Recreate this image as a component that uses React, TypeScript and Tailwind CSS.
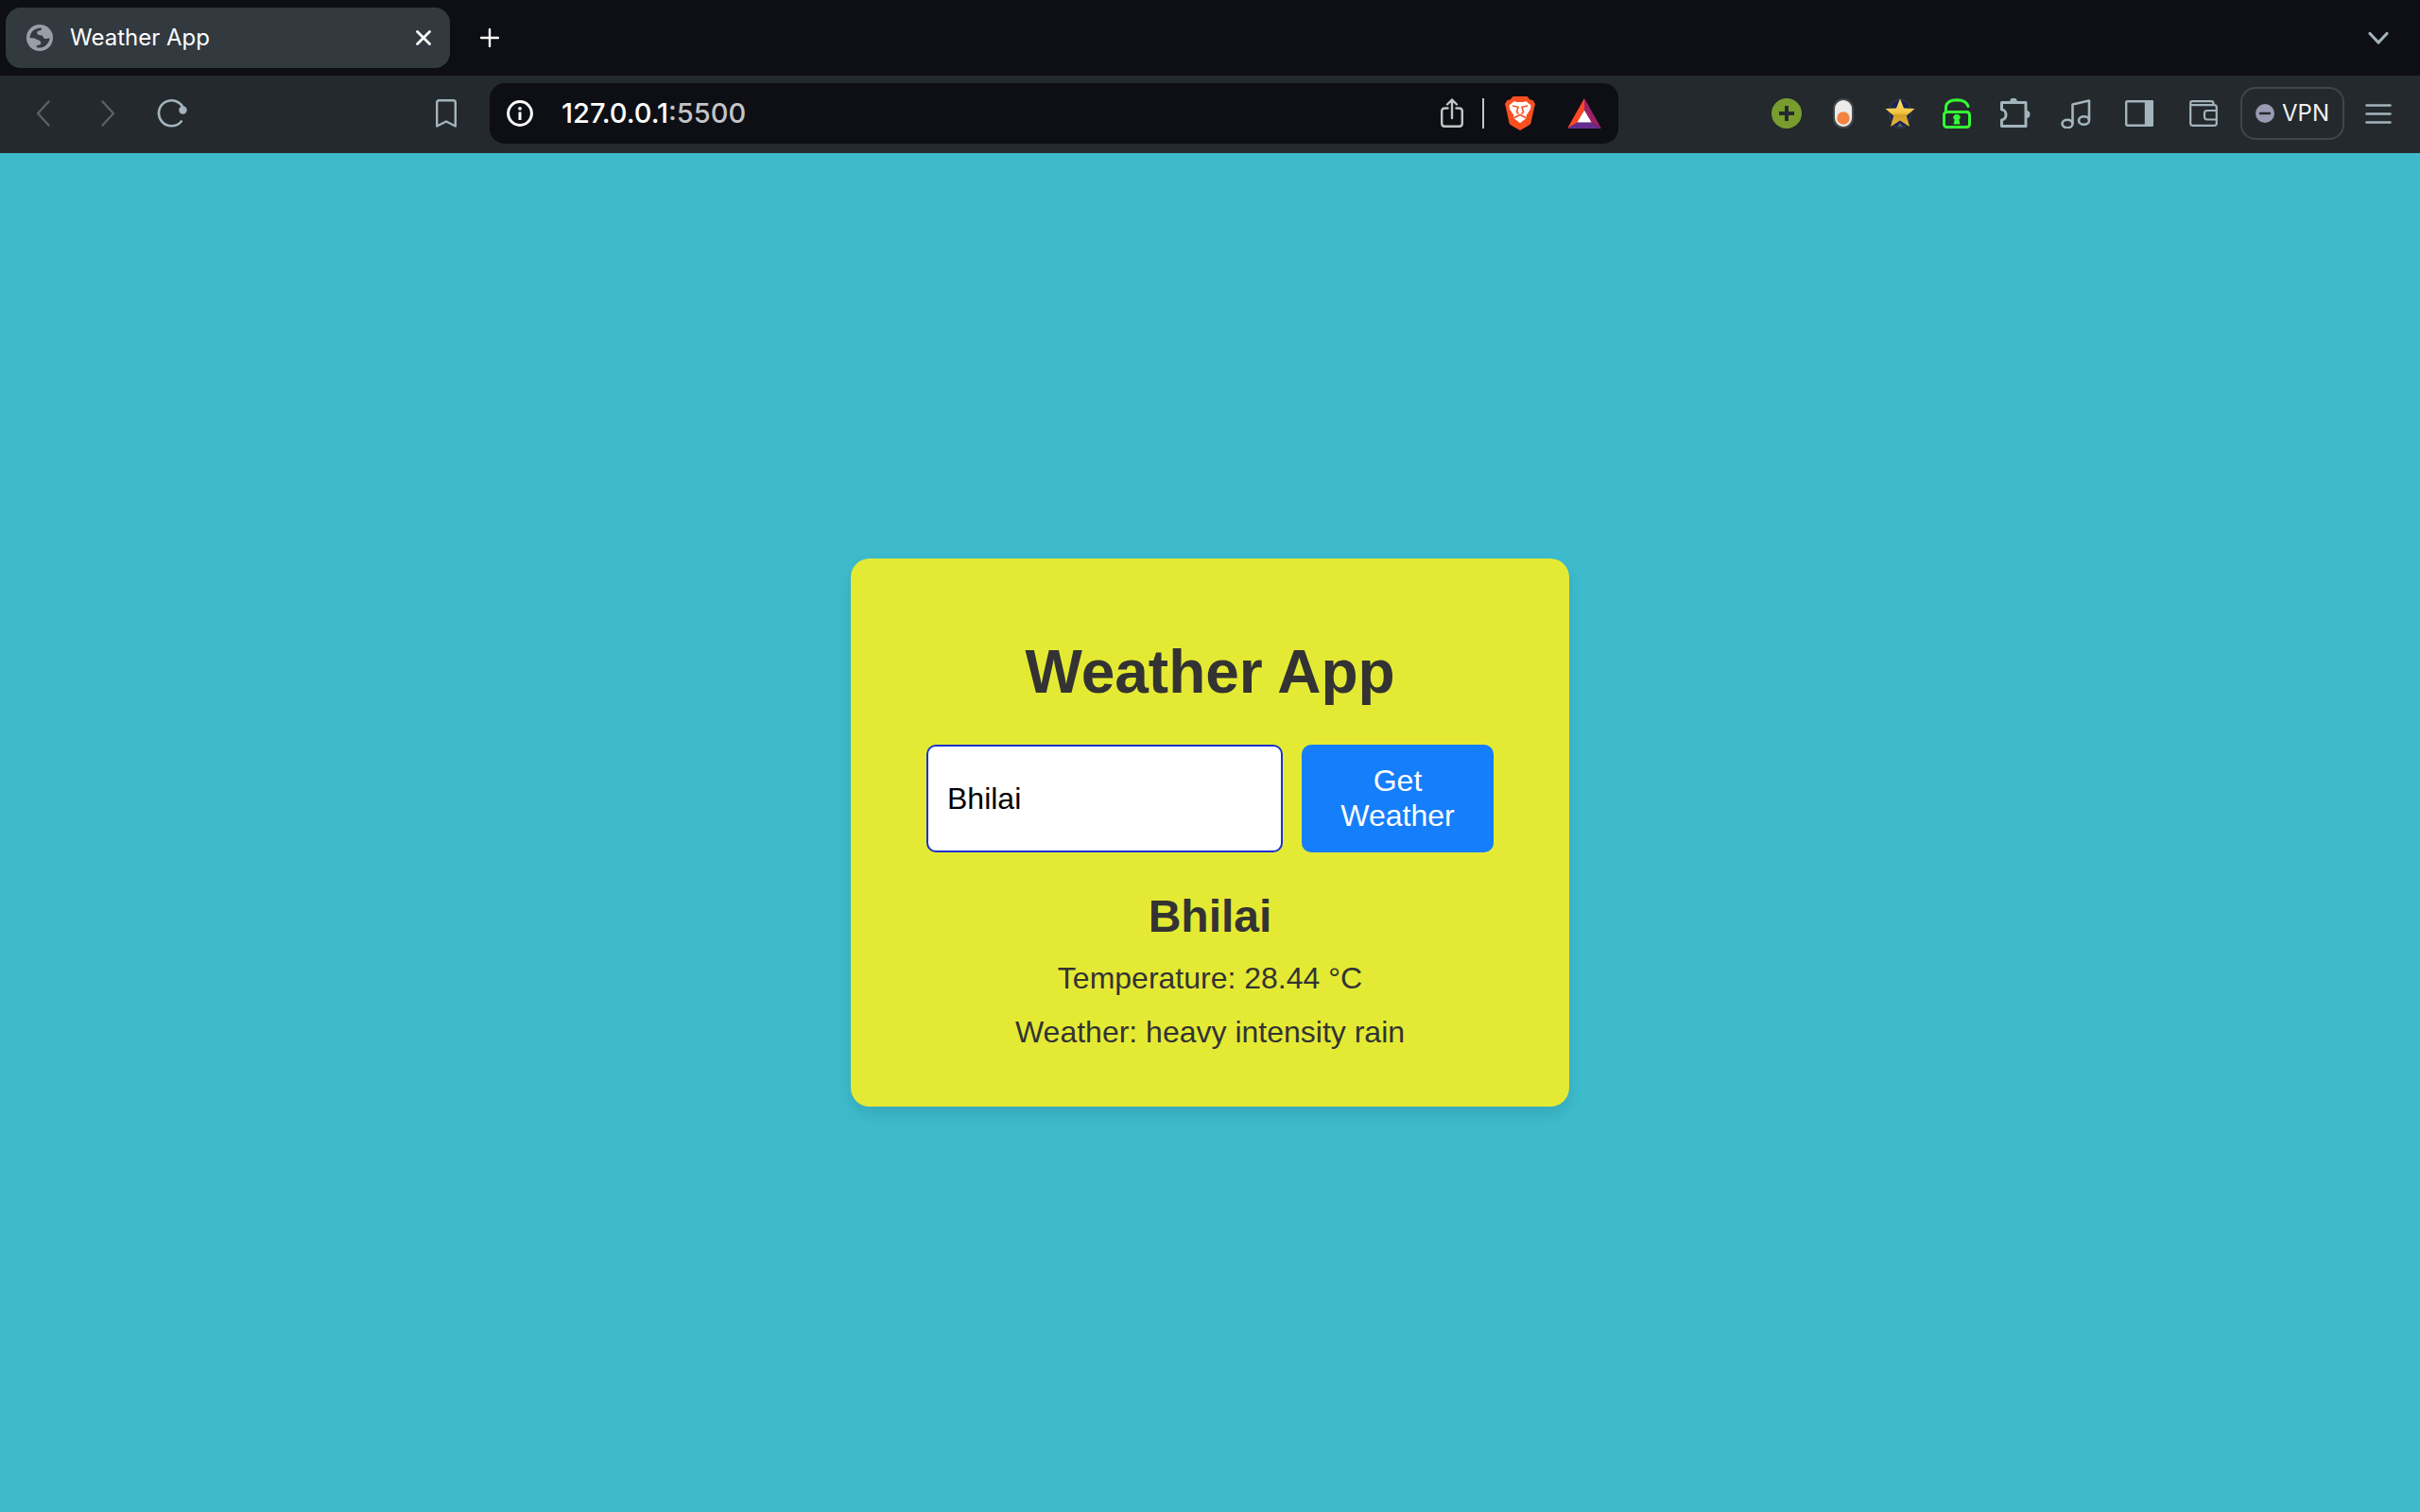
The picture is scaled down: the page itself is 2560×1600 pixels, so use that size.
import { useState } from "react";
import type { ReactNode } from "react";

type IconButtonProps = {
  label: string;
  className: string;
  children: ReactNode;
};

function IconButton({ label, className, children }: IconButtonProps) {
  return (
    <button type="button" aria-label={label} className={`flex shrink-0 items-center justify-center ${className}`}>
      {children}
    </button>
  );
}

function GlobeIcon() {
  return (
    <svg viewBox="0 0 28 28" className="size-7 shrink-0" aria-hidden="true">
      <circle cx="14" cy="14" r="14" fill="#9b9ea9" />
      <path
        d="M3.6 14.3C3.4 8.5 8 3.7 15.6 3.5C16.6 4.5 16 5.6 14.6 6.2C12.4 6.6 11 7 11.2 9.2C11.6 11 14.8 11.2 16.4 11.6C17.6 12.4 17.6 14 19 14.8C20.8 15.4 22.6 15 24.6 13.9C24.4 19 20 24.2 14.6 24.5C12.6 24.6 11 24.4 10.4 23.8C10.2 22.6 11.6 21.9 13.6 21.6C15.6 21 15.8 18.4 14.2 17.2C12.4 16.2 10.6 15.8 9.2 14.8C7.4 14.2 5.4 14.6 3.6 14.3Z"
        fill="#333a40"
      />
    </svg>
  );
}

function BraveIcon() {
  return (
    <svg viewBox="0 0 32 36" className="h-9 w-8" aria-hidden="true">
      <path d="M8.500 0H23.500L26.500 3.500L29.500 4L32 8L31 12L27.500 28Q27 29.500 25.500 30.500L16 36L6.500 30.500Q5 29.500 4.500 28L1 12L0 8L2.500 4L5.500 3.500Z" fill="#fb4f1f" />
      <path
        d="M9.500 5.300L13 6H19L22.500 5.300L27.500 9.500L27 13.500L23 19.500L22 23.500L16 28.300L10 23.500L9 19.500L5 13.500L4.500 9.500Z"
        fill="#fff"
      />
      <path
        d="M8 10L14 11.300L12.500 16.500L14.500 18.500M24 10L18 11.300L19.500 16.500L17.500 18.500M10 22.500L16 19.500L22 22.500"
        fill="none"
        stroke="#fb4f1f"
        strokeWidth="1.600"
      />
    </svg>
  );
}

function TabStrip() {
  return (
    <div className="flex h-20 items-center bg-[#0d0f14] pr-8 pl-1.5 text-white">
      <div className="flex h-16 w-[470px] items-center rounded-2xl bg-[#32393f] pr-5 pl-[22px]">
        <GlobeIcon />
        <span className="ml-[18px] flex-1 text-2xl font-normal">Weather App</span>
        <IconButton label="Close tab" className="size-4">
          <svg viewBox="0 0 16 16" className="size-4" fill="none" stroke="currentColor" strokeWidth="2.800" strokeLinecap="round">
            <path d="M1.500 1.500L14.500 14.500M14.500 1.500L1.500 14.500" />
          </svg>
        </IconButton>
      </div>
      <IconButton label="New tab" className="ml-8 size-5">
        <svg viewBox="0 0 20 20" className="size-5" fill="none" stroke="currentColor" strokeWidth="2.400" strokeLinecap="round">
          <path d="M10 1V19M1 10H19" />
        </svg>
      </IconButton>
      <IconButton label="Search tabs" className="ml-auto h-4 w-6 text-[#a3b4bd]">
        <svg viewBox="0 0 24 16" className="h-4 w-6" fill="none" stroke="currentColor" strokeWidth="3.200" strokeLinecap="round" strokeLinejoin="round">
          <path d="M3 3.500L12 13L21 3.500" />
        </svg>
      </IconButton>
    </div>
  );
}

function AddressBar() {
  const [url, setUrl] = useState("127.0.0.1:5500");
  const split = url.indexOf(":");
  const host = split < 0 ? url : url.slice(0, split);
  const port = split < 0 ? "" : url.slice(split);
  return (
    <div className="flex h-16 max-w-[1194px] flex-1 items-center rounded-2xl bg-[#0d0f14] px-[18px]">
      <IconButton label="Site information" className="size-7 text-white">
        <svg viewBox="0 0 28 28" className="size-7" fill="none" stroke="currentColor">
          <circle cx="14" cy="14" r="12.400" strokeWidth="3" />
          <circle cx="14" cy="8.800" r="1.900" fill="currentColor" stroke="none" />
          <path d="M14 12.500V21" strokeWidth="3" />
        </svg>
      </IconButton>
      <div className="relative ml-[30px] flex-1 text-[29px] leading-9 font-medium">
        <div aria-hidden="true" className="text-white">
          {host}
          <span className="text-[#c3c4c6]">{port}</span>
        </div>
        <input
          aria-label="Address"
          value={url}
          onChange={(e) => setUrl(e.target.value)}
          className="absolute inset-0 w-full bg-transparent text-transparent caret-white outline-none"
        />
      </div>
      <IconButton label="Share" className="h-8 w-6 text-[#c3c4c6]">
        <svg viewBox="0 0 24 32" className="h-8 w-6" fill="none" stroke="currentColor" strokeWidth="2.400" strokeLinecap="round" strokeLinejoin="round">
          <path d="M7.500 10.500H4.500Q1.200 10.500 1.200 13.800V26.500Q1.200 29.800 4.500 29.800H19.500Q22.800 29.800 22.800 26.500V13.800Q22.800 10.500 19.500 10.500H16.500M12 21V1.500M7 6.500L12 1.500L17 6.500" />
        </svg>
      </IconButton>
      <span className="ml-5 h-8 w-0.5 bg-[#c3c4c6]" />
      <IconButton label="Brave Shields" className="ml-[22px] h-9 w-8">
        <BraveIcon />
      </IconButton>
      <IconButton label="Brave Rewards" className="ml-[34px] h-8 w-9">
        <svg viewBox="0 0 36 32" className="h-8 w-9">
          <path d="M18 0V12L11 25.500L0 32Z" fill="#ff4724" />
          <path d="M18 0V12L25 25.500L36 32Z" fill="#9e1f63" />
          <path d="M0 32L11 25.500H25L36 32Z" fill="#662d91" />
          <path d="M18 12.500L25.500 25.500H10.500Z" fill="#fff" />
        </svg>
      </IconButton>
    </div>
  );
}

function Extensions() {
  return (
    <div className="ml-auto flex items-center pl-8 text-[#a3b4bd]">
      <IconButton label="Add" className="size-8">
        <svg viewBox="0 0 32 32" className="size-8">
          <circle cx="16" cy="16" r="16" fill="#789c2d" />
          <path d="M16 8V24M8 16H24" stroke="#242a2e" strokeWidth="4" />
        </svg>
      </IconButton>
      <IconButton label="Toggle" className="ml-8 h-8 w-6">
        <svg viewBox="0 0 24 32" className="h-8 w-6">
          <rect x="2" y="1" width="20" height="30" rx="10" fill="#ebeceb" stroke="#45484a" strokeWidth="2" />
          <circle cx="12" cy="21" r="6.700" fill="#f58240" />
        </svg>
      </IconButton>
      <IconButton label="Favourites" className="ml-8 size-8">
        <svg viewBox="0 0 32 32" className="size-8">
          <defs>
            <linearGradient id="gold" x1="0" y1="0" x2="0" y2="1">
              <stop offset="0" stopColor="#ffe274" />
              <stop offset="0.500" stopColor="#f4c440" />
              <stop offset="0.600" stopColor="#d5a02a" />
              <stop offset="1" stopColor="#e8b73d" />
            </linearGradient>
          </defs>
          <path d="M16 1L24 4L28 12L26 23L20 31H12L6 23L4 12L8 4Z" fill="#172451" stroke="#3a4148" strokeWidth="1" />
          <path d="M16 26L19 30H13Z" fill="#565f68" />
          <path d="M16 0.500L20 10.500L31.500 11L22.800 18.500L26 30L16 23.500L6 30L9.200 18.500L0.500 11L12 10.500Z" fill="url(#gold)" />
        </svg>
      </IconButton>
      <IconButton label="Unlock" className="ml-7 size-8 text-[#35fb35]">
        <svg viewBox="0 0 32 32" className="size-8" fill="none" stroke="currentColor" strokeWidth="3" strokeLinecap="round">
          <rect x="2.500" y="14.500" width="27" height="16" rx="3" />
          <path d="M4.500 14V8.500Q6 2 16 1.800Q26 2 28 8.500" />
          <path d="M16 17C20.500 17 20.500 21.500 18.300 22.500L19.500 27.500H12.500L13.700 22.500C11.500 21.500 11.500 17 16 17Z" fill="currentColor" stroke="none" />
        </svg>
      </IconButton>
      <IconButton label="Extensions" className="ml-[30px] size-8">
        <svg viewBox="0 0 32 32" className="size-8" fill="none" stroke="currentColor" strokeWidth="3" strokeLinejoin="round">
          <path d="M1.500 4.500H27V29.500H1.500V23C7.500 22 7.500 12.500 1.500 12Z" />
          <path d="M10 4A4 4.500 0 0 1 18 4ZM27.500 13A4 4 0 0 1 27.500 21Z" fill="currentColor" stroke="none" />
        </svg>
      </IconButton>
      <IconButton label="Playlist" className="ml-8 size-8">
        <svg viewBox="0 0 32 32" className="size-8" fill="none" stroke="currentColor" strokeWidth="2.600" strokeLinejoin="round">
          <path d="M12.500 27V6.500L30 2.500V23" />
          <ellipse cx="7" cy="27" rx="5.500" ry="4.200" />
          <ellipse cx="24.500" cy="23.500" rx="5.500" ry="4.200" />
        </svg>
      </IconButton>
      <IconButton label="Sidebar" className="ml-9 h-7 w-[30px]">
        <svg viewBox="0 0 30 28" className="h-7 w-[30px]" fill="none" stroke="currentColor" strokeWidth="2.400" strokeLinejoin="round">
          <rect x="1.200" y="1.200" width="27.600" height="25.600" rx="1.500" />
          <path d="M22 1.200H28.800V26.800H22Z" fill="currentColor" />
        </svg>
      </IconButton>
      <IconButton label="Wallet" className="ml-[38px] h-7 w-[30px]">
        <svg viewBox="0 0 30 28" className="h-7 w-[30px]" fill="none" stroke="currentColor" strokeWidth="2.200" strokeLinejoin="round">
          <path d="M1.200 4V24.500Q1.200 26.800 3.500 26.800H26.500Q28.800 26.800 28.800 24.500V7.500Q28.800 5.200 26.500 5.200H3Q1.200 5.200 1.200 3.200Q1.200 1.200 3 1.200H23Q25.500 1.200 25.500 3.500V5M28.800 11H19Q16 11 16 14V17.500Q16 20.500 19 20.500H28.800" />
        </svg>
      </IconButton>
      <button
        type="button"
        className="ml-6 flex h-14 w-[110px] items-center gap-2 rounded-2xl border-2 border-[#3c484b] pl-3.5 text-2xl text-[#f0f1f4]"
      >
        <svg viewBox="0 0 20 20" className="size-5" aria-hidden="true">
          <circle cx="10" cy="10" r="10" fill="#9a9bb1" />
          <path d="M5 10H15" stroke="#242a2e" strokeWidth="2.400" strokeLinecap="round" />
        </svg>
        VPN
      </button>
      <IconButton label="Menu" className="ml-[22px] h-6 w-7">
        <svg viewBox="0 0 28 24" className="h-6 w-7" fill="none" stroke="currentColor" strokeWidth="2.600" strokeLinecap="round">
          <path d="M1.500 3.500H26.500M1.500 12.500H26.500M1.500 21.500H26.500" />
        </svg>
      </IconButton>
    </div>
  );
}

function Toolbar() {
  return (
    <div className="flex h-[82px] items-center bg-[#23292d] pr-[30px] pb-0.5 pl-[38px] text-[#a3b4bd]">
      <IconButton label="Back" className="h-7 w-4 text-[#586265]">
        <svg viewBox="0 0 16 28" className="h-7 w-4" fill="none" stroke="currentColor" strokeWidth="2.400" strokeLinecap="round" strokeLinejoin="round">
          <path d="M13.500 1.500L2 14L13.500 26.500" />
        </svg>
      </IconButton>
      <IconButton label="Forward" className="ml-[52px] h-7 w-4 text-[#586265]">
        <svg viewBox="0 0 16 28" className="h-7 w-4" fill="none" stroke="currentColor" strokeWidth="2.400" strokeLinecap="round" strokeLinejoin="round">
          <path d="M2.500 1.500L14 14L2.500 26.500" />
        </svg>
      </IconButton>
      <IconButton label="Reload" className="ml-11 h-8 w-8">
        <svg viewBox="0 0 32 32" className="size-8" fill="none" stroke="currentColor" strokeWidth="2.600" strokeLinecap="round">
          <path d="M28.300 11.500A13.500 13.500 0 1 0 25.800 24.500" />
          <circle cx="27.500" cy="12.500" r="4.200" fill="currentColor" stroke="none" />
        </svg>
      </IconButton>
      <IconButton label="Bookmark" className="mr-[35px] ml-[263px] h-[30px] w-[22px]">
        <svg viewBox="0 0 22 30" className="h-[30px] w-[22px]" fill="none" stroke="currentColor" strokeWidth="2.400" strokeLinejoin="round">
          <path d="M3.500 1.200H18.500Q20.800 1.200 20.800 3.500V28.500L11 23.500L1.200 28.500V3.500Q1.200 1.200 3.500 1.200Z" />
        </svg>
      </IconButton>
      <AddressBar />
      <Extensions />
    </div>
  );
}

function WeatherCard() {
  const [city, setCity] = useState("Bhilai");
  return (
    <section className="w-[760px] rounded-[20px] bg-[#e4ea34] px-20 pt-[83px] pb-[60px] text-center text-[32px] leading-[37px] text-[#333] shadow-[0_8px_16px_rgba(0,0,0,0.1)]">
      <h1 className="text-[64px] leading-[74px] font-bold">Weather App</h1>
      <form className="mt-10 flex gap-5" onSubmit={(e) => e.preventDefault()}>
        <input
          aria-label="City"
          value={city}
          onChange={(e) => setCity(e.target.value)}
          className="min-w-0 flex-1 rounded-[10px] border-2 border-[#1a31cc] bg-white px-5 text-black outline-none"
        />
        <button type="submit" className="w-[203px] rounded-[10px] bg-[#157efb] px-10 py-5 text-white">
          Get Weather
        </button>
      </form>
      <h2 className="mt-10 text-5xl leading-[55px] font-bold">Bhilai</h2>
      <p className="mt-5">Temperature: 28.44 °C</p>
      <p className="mt-5">Weather: heavy intensity rain</p>
    </section>
  );
}

export default function App() {
  return (
    <div className="flex min-h-screen flex-col bg-[#3dbbcd]">
      <header className="font-['Inter',sans-serif]">
        <TabStrip />
        <Toolbar />
      </header>
      <main className="flex flex-1 items-center justify-center font-['Liberation_Sans',Arial,sans-serif]">
        <WeatherCard />
      </main>
    </div>
  );
}
